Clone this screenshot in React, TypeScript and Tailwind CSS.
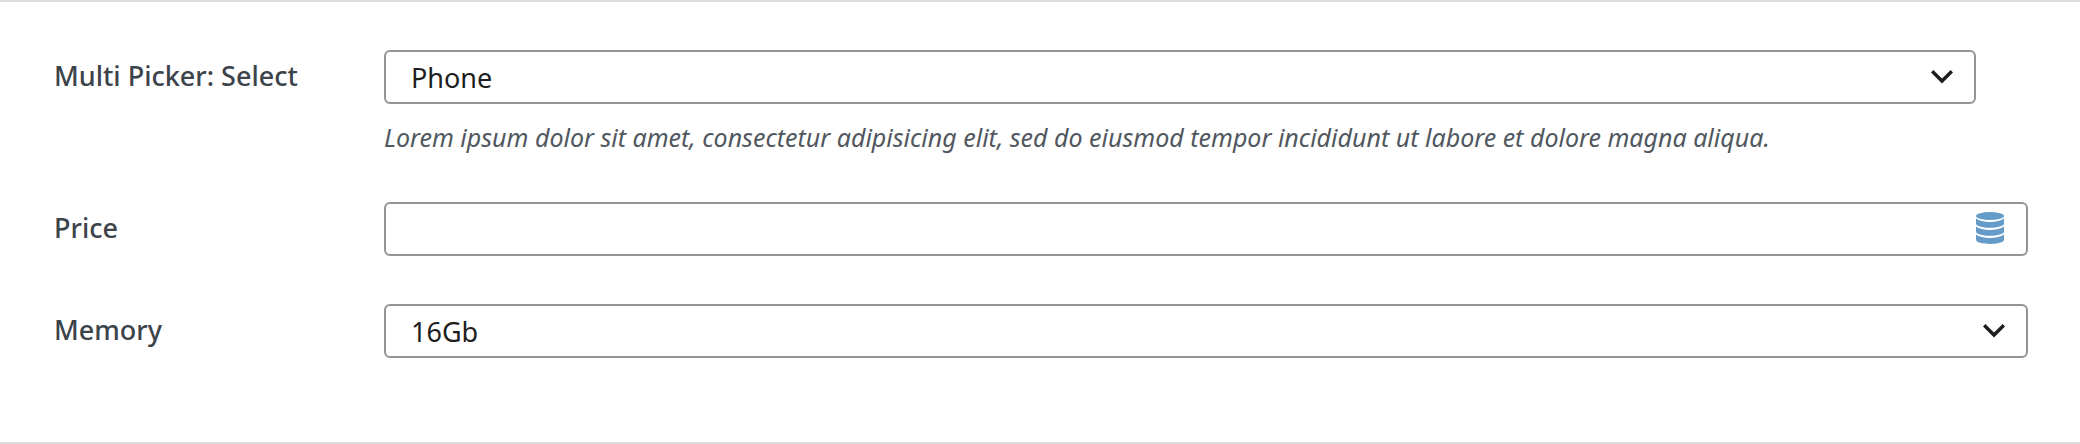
import type { ReactNode } from 'react';

const control =
  'block h-[54px] w-full appearance-none rounded-md border-2 border-[#949494] bg-white px-[25px] pt-0.5 text-[27px] leading-8 text-[#1e1e1e] outline-none focus:border-[#2271b1]';

function Field({ id, label, children }: { id: string; label: string; children: ReactNode }) {
  return (
    <div className="flex items-start">
      <label
        htmlFor={id}
        className="w-[330px] shrink-0 pt-2 text-[27px] leading-9 font-medium text-[#3c434a]"
      >
        {label}
      </label>
      <div className="min-w-0 flex-1">{children}</div>
    </div>
  );
}

function Chevron() {
  return (
    <svg
      viewBox="0 0 22 14"
      className="pointer-events-none absolute top-5 right-[23px] h-[14px] w-[22px]"
      fill="none"
      stroke="#1e1e1e"
      strokeWidth="3.4"
      aria-hidden="true"
    >
      <path d="M1.2 1.2 11 11l9.8-9.8" />
    </svg>
  );
}

function Select({ id, options }: { id: string; options: string[] }) {
  return (
    <div className="relative">
      <select id={id} className={control}>
        {options.map((option) => (
          <option key={option}>{option}</option>
        ))}
      </select>
      <Chevron />
    </div>
  );
}

function DatabaseIcon() {
  return (
    <svg viewBox="0 0 28 32" className="h-8 w-7" fill="#649bc9" aria-hidden="true">
      <ellipse cx="14" cy="4" rx="14" ry="4" />
      <path d="M0 6.6C3 8.9 8 10 14 10s11-1.1 14-3.4v5.2c0 2.2-6.3 4-14 4s-14-1.8-14-4z" />
      <path d="M0 14.6C3 16.9 8 18 14 18s11-1.1 14-3.4v5.2c0 2.2-6.3 4-14 4s-14-1.8-14-4z" />
      <path d="M0 22.6C3 24.9 8 26 14 26s11-1.1 14-3.4v5.2c0 2.4-6.3 4.2-14 4.2s-14-1.8-14-4.2z" />
    </svg>
  );
}

export default function App() {
  return (
    <form className="flex flex-col gap-12 border-y-2 border-[#dcdcdc] bg-white pt-12 pr-[52px] pb-[84px] pl-[54px] font-['Noto_Sans','Open_Sans',sans-serif]">
      <Field id="picker" label="Multi Picker: Select">
        <div className="pr-[52px]">
          <Select id="picker" options={['Phone', 'Laptop']} />
        </div>
        <p className="pt-4 text-[25px] leading-[34px] text-[#50575e] italic">
          Lorem ipsum dolor sit amet, consectetur adipisicing elit, sed do eiusmod tempor incididunt
          ut labore et dolore magna aliqua.
        </p>
      </Field>
      <Field id="price" label="Price">
        <div className="relative">
          <input id="price" type="text" className={control} />
          <button
            type="button"
            aria-label="Insert dynamic value"
            className="absolute top-[10px] right-[24px]"
          >
            <DatabaseIcon />
          </button>
        </div>
      </Field>
      <Field id="memory" label="Memory">
        <Select id="memory" options={['16Gb', '32Gb', '64Gb']} />
      </Field>
    </form>
  );
}
